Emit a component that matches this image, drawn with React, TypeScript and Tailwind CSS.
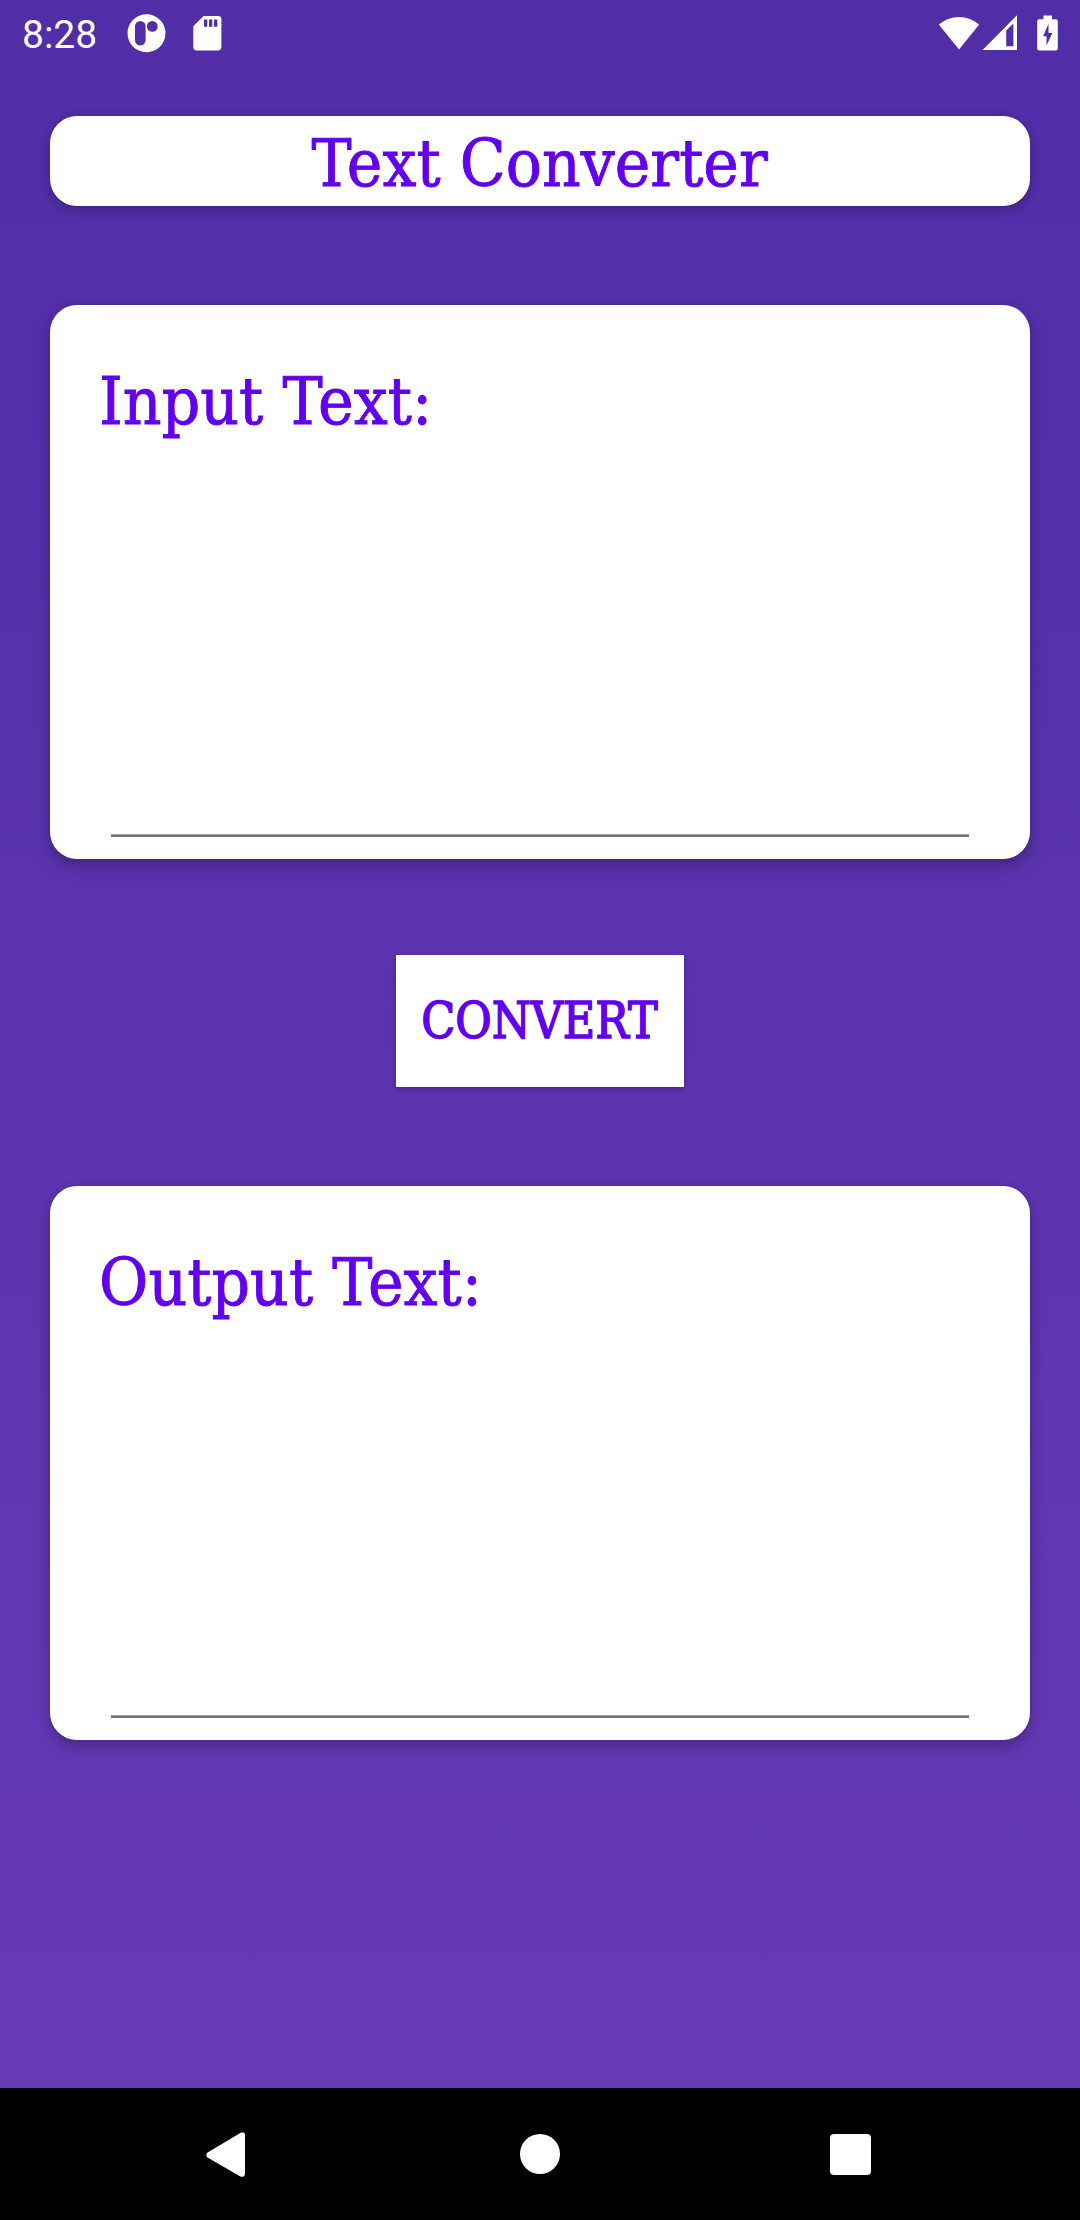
import type { ReactNode } from "react";

const slab = "font-['Roboto_Slab','DejaVu_Serif',serif] text-[#6200ee] whitespace-nowrap";
const cardShadow = "shadow-[0_7px_16px_rgba(0,0,0,0.22),0_1px_10px_rgba(0,0,0,0.12)]";
const titleShadow = "shadow-[0_4px_14px_rgba(0,0,0,0.2),0_1px_8px_rgba(0,0,0,0.1)]";

function StatusBar() {
  return (
    <header className="flex h-[66px] items-start justify-between text-white">
      <div className="flex items-start">
        <span className="ml-[22px] mt-[11px] w-[76px] font-['Roboto',sans-serif] text-[39px] leading-[48px]">
          8:28
        </span>
        <svg className="ml-[29px] mt-[14px]" width="39" height="39" viewBox="0 0 39 39" fill="currentColor">
          <path
            fillRule="evenodd"
            d="M19.5 0.3a19 19 0 1 0 0 38a19 19 0 1 0 0-38zM13.3 7a5.3 5.3 0 0 1 5.3 5.3v14a5.3 5.3 0 0 1-10.6 0v-14a5.3 5.3 0 0 1 5.3-5.3zM25.3 7a5.4 5.4 0 1 1 0 10.8a5.4 5.4 0 1 1 0-10.8z"
          />
        </svg>
        <svg className="ml-[27px] mt-[16px]" width="29" height="35" viewBox="0 0 29 35" fill="currentColor">
          <path
            fillRule="evenodd"
            d="M10.5 0H25a3.4 3.4 0 0 1 3.4 3.4V31a3.4 3.4 0 0 1-3.4 3.4H3.7A3.4 3.4 0 0 1 0.3 31V10.3zM11 3.6v7.2h3.3V3.6zM16 3.6v7.2h3.3V3.6zM21 3.6v7.2h3.3V3.6z"
          />
        </svg>
      </div>
      <div className="flex items-start">
        <svg className="mt-[15px]" width="42" height="35" viewBox="0 0 42 35" fill="currentColor">
          <path d="M0.8 9.5A31 31 0 0 1 41.2 9.5L21 34.5z" />
        </svg>
        <svg className="ml-[2px] mt-[15px]" width="36" height="36" viewBox="0 0 36 36" fill="currentColor">
          <path fillRule="evenodd" d="M0.5 35L35 0.3V35zM24.2 15.4V31.3H31.4V8.4z" />
        </svg>
        <svg className="ml-[19px] mr-[21px] mt-[15px]" width="22" height="36" viewBox="0 0 22 36" fill="currentColor">
          <path
            fillRule="evenodd"
            d="M6.5 0.5h8.5v3.7H18.8a2 2 0 0 1 2 2V33.6a2 2 0 0 1-2 2H2.2a2 2 0 0 1-2-2V6.2a2 2 0 0 1 2-2H6.5zM11.5 9L6 21.3h3.5V30.5L15.4 18h-3.9z"
          />
        </svg>
      </div>
    </header>
  );
}

function Card({ label }: { label: ReactNode }) {
  return (
    <section className={`flex h-[554px] flex-col justify-between rounded-[27px] bg-white ${cardShadow}`}>
      <label className={`${slab} ml-[49px] mt-[57px] inline-block w-max origin-left scale-x-[0.935] text-[64.5px] leading-[80px] [-webkit-text-stroke:0.9px_#6200ee]`}>
        {label}
      </label>
      <div className="mx-[61px] mb-[22px] h-[3px] border-t border-[#a3a3a3] bg-[#757575]" />
    </section>
  );
}

function NavBar() {
  return (
    <nav className="flex h-[132px] bg-black pt-[45px] text-white">
      <svg className="ml-[205px] -mt-px" width="42" height="46" viewBox="0 0 42 46" fill="currentColor">
        <path d="M2.6 20.6L35.3 0.9Q39.8-0.9 40 3V41.5Q39.8 46 35.3 44.4L2.6 25.6Q0 23 2.6 20.6z" />
      </svg>
      <div className="ml-[273px] mt-px size-[40px] rounded-full bg-white" />
      <div className="ml-[270px] mt-px size-[41px] rounded-[4px] bg-white" />
    </nav>
  );
}

export default function App() {
  return (
    <div className="flex h-[2220px] w-[1080px] flex-col overflow-hidden bg-black">
      <div className="flex h-[2088px] flex-col bg-linear-to-b from-[#512da8] to-[#673ab7]">
        <StatusBar />
        <main className="flex flex-col px-[50px] pt-[50px]">
          <h1 className={`${slab} ${titleShadow} flex h-[90px] justify-center rounded-[27px] bg-white pt-[5px] text-[64.5px] leading-[86px]`}>
            <span className="inline-block scale-x-[0.933] [-webkit-text-stroke:0.9px_#6200ee]">Text Converter</span>
          </h1>
          <div className="mt-[99px]">
            <Card label="Input Text:" />
          </div>
          <button className={`${slab} mx-auto mt-[96px] mb-[99px] flex h-[132px] w-[288px] items-center justify-center bg-white pt-px text-[51px] shadow-[0_4px_8px_rgba(0,0,0,0.16),0_1px_4px_rgba(0,0,0,0.1)]`}>
            <span className="inline-block scale-x-[0.872] [-webkit-text-stroke:1.6px_#6200ee]">CONVERT</span>
          </button>
          <Card label="Output Text:" />
        </main>
      </div>
      <NavBar />
    </div>
  );
}
